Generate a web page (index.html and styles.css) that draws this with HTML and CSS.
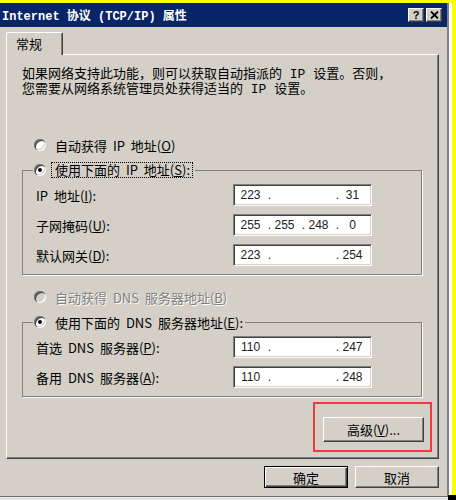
FILE: index.html
```html
<!DOCTYPE html>
<html lang="zh-CN">
<head>
  <meta charset="UTF-8" />
  <title>Internet 协议 (TCP/IP) 属性</title>
  <link rel="stylesheet" href="styles.css">
</head>
<body>
  <div class="screen">
    <div class="window">
      <div class="titlebar">
        <span class="title">Internet 协议 (TCP/IP) 属性</span>
        <div class="title-buttons">
          <span class="tbtn">?</span>
          <span class="tbtn">
            <svg width="9" height="8" viewBox="0 0 9 8"><path d="M1 0.5 L8 7.5 M8 0.5 L1 7.5" stroke="#000" stroke-width="1.8"/></svg>
          </span>
        </div>
      </div>
      <div class="content">
        <div class="tabs"><div class="tab">常规</div></div>
        <div class="panel">
          <p class="desc">如果网络支持此功能，则可以获取自动指派的 IP 设置。否则，<br>您需要从网络系统管理员处获得适当的 IP 设置。</p>

          <div class="option first"><span class="radio"></span><span>自动获得 IP 地址(<u>O</u>)</span></div>

          <fieldset class="group">
            <legend>
              <span class="option"><span class="radio checked"></span><span class="focus-box">使用下面的 IP 地址(<u>S</u>):</span></span>
            </legend>
            <div class="field-row">
              <span class="field-label">IP 地址(<u>I</u>):</span>
              <div class="ip-input">
                <span class="octet">223</span><span class="dot">.</span><span class="octet"></span><span class="dot"></span><span class="octet"></span><span class="dot">.</span><span class="octet">31</span>
              </div>
            </div>
            <div class="field-row">
              <span class="field-label">子网掩码(<u>U</u>):</span>
              <div class="ip-input">
                <span class="octet">255</span><span class="dot">.</span><span class="octet">255</span><span class="dot">.</span><span class="octet">248</span><span class="dot">.</span><span class="octet">0</span>
              </div>
            </div>
            <div class="field-row">
              <span class="field-label">默认网关(<u>D</u>):</span>
              <div class="ip-input">
                <span class="octet">223</span><span class="dot">.</span><span class="octet"></span><span class="dot"></span><span class="octet"></span><span class="dot">.</span><span class="octet">254</span>
              </div>
            </div>
          </fieldset>

          <div class="option disabled after-group"><span class="radio"></span><span>自动获得 DNS 服务器地址(<u>B</u>)</span></div>

          <fieldset class="group">
            <legend>
              <span class="option"><span class="radio checked"></span><span class="plain-box">使用下面的 DNS 服务器地址(<u>E</u>):</span></span>
            </legend>
            <div class="field-row">
              <span class="field-label">首选 DNS 服务器(<u>P</u>):</span>
              <div class="ip-input">
                <span class="octet">110</span><span class="dot">.</span><span class="octet"></span><span class="dot"></span><span class="octet"></span><span class="dot">.</span><span class="octet">247</span>
              </div>
            </div>
            <div class="field-row">
              <span class="field-label">备用 DNS 服务器(<u>A</u>):</span>
              <div class="ip-input">
                <span class="octet">110</span><span class="dot">.</span><span class="octet"></span><span class="dot"></span><span class="octet"></span><span class="dot">.</span><span class="octet">248</span>
              </div>
            </div>
          </fieldset>

          <div class="advanced">
            <div class="highlight">
              <button class="btn adv-btn">高级(<u>V</u>)...</button>
            </div>
          </div>
        </div>
        <div class="dialog-buttons">
          <button class="btn default">确定</button>
          <button class="btn">取消</button>
        </div>
      </div>
    </div>
  </div>
</body>
</html>
```

FILE: styles.css
```css
/* Reset */
* { margin: 0; padding: 0; box-sizing: border-box; }
body {
  background: #ffff00;
  font-family: "Noto Sans CJK SC", sans-serif;
  font-size: 13px;
  color: #000;
}
.screen {
  position: relative;
  width: 456px;
  height: 500px;
  padding-top: 3px;
  overflow: hidden;
}
/* stray corner from the screen capture */
.screen::after {
  content: "";
  position: absolute;
  right: 0;
  bottom: 0;
  width: 8px;
  height: 5px;
  background: #000;
}
/* Window frame */
.window {
  width: 449px;
  height: 494px;
  background: #d4d0c8;
  border-right: 2px solid #808080;
  border-bottom: 1px solid #707070;
  box-shadow: 3px 0 0 #fff, 0 3px 0 #e4e4e4;
}
.titlebar {
  height: 24px;
  background: #0a2468;
  display: flex;
  align-items: center;
  justify-content: space-between;
  padding: 0 5px 0 2px;
}
.title {
  color: #fff;
  font-family: "Liberation Mono", "Noto Sans CJK SC", monospace;
  font-weight: bold;
  font-size: 12px;
  white-space: nowrap;
}
.title-buttons { display: flex; gap: 2px; }
.tbtn {
  width: 16px;
  height: 14px;
  background: #d4d0c8;
  border: 1px solid;
  border-color: #fff #404040 #404040 #fff;
  box-shadow: inset -1px -1px #808080;
  display: flex;
  align-items: center;
  justify-content: center;
  font: bold 11px "Liberation Sans", sans-serif;
  line-height: 1;
}
/* Tab + panel */
.content { padding: 5px 0 0 6px; }
.tab {
  position: relative;
  z-index: 1;
  width: 57px;
  height: 23px;
  margin-bottom: -1px;
  background: #d4d0c8;
  border-top: 1px solid #fff;
  border-left: 1px solid #fff;
  border-right: 1px solid #404040;
  border-radius: 2px 2px 0 0;
  box-shadow: inset -1px 0 #808080;
  padding-left: 9px;
  line-height: 21px;
}
.panel {
  width: 433px;
  height: 405px;
  border: 1px solid;
  border-color: #fff #404040 #404040 #fff;
  box-shadow: inset -1px -1px #808080;
  padding: 12px 0 0 15px;
}
.desc {
  font-family: "Liberation Mono", "Noto Sans CJK SC", monospace;
  font-size: 13px;
  line-height: 15px;
  white-space: nowrap;
}
/* Radio options */
.option {
  display: flex;
  align-items: center;
  height: 16px;
  gap: 9px;
  padding-left: 12px;
  word-spacing: 3px;
  white-space: nowrap;
}
.option.first { margin-top: 40px; }
.option.after-group { margin-top: 14px; }
.option.disabled { color: #808080; text-shadow: 1px 1px 0 #fff; }
.radio {
  position: relative;
  flex: none;
  width: 12px;
  height: 12px;
  border-radius: 50%;
  background: #fff;
  box-shadow: inset 1px 1px 0 #808080, inset 2px 2px 0 #404040,
              inset -1px -1px 0 #fff, inset -2px -2px 0 #d4d0c8;
}
.option.disabled .radio { background: #d4d0c8; }
.radio.checked::after {
  content: "";
  position: absolute;
  left: 4px;
  top: 4px;
  width: 4px;
  height: 4px;
  border-radius: 50%;
  background: #000;
}
legend { padding: 0 2px 0 1px; }
legend .option { padding-left: 0; gap: 5px; }
.focus-box {
  border: 1px dotted #000;
  padding: 0 2px 0 3px;
  line-height: 14px;
}
.plain-box { padding-left: 4px; }
/* Group boxes */
.group {
  width: 400px;
  margin-top: 9px;
  border: 1px solid #808080;
  box-shadow: 1px 1px 0 #fff;
  padding: 6px 0 8px 10px;
}
.field-row {
  display: flex;
  align-items: center;
  height: 22px;
  padding-left: 3px;
  word-spacing: 3px;
  white-space: nowrap;
}
.field-row + .field-row { margin-top: 8px; }
.field-label { width: 197px; }
.ip-input {
  display: flex;
  align-items: center;
  width: 139px;
  height: 22px;
  background: #fff;
  border: 1px solid;
  border-color: #808080 #fff #fff #808080;
  box-shadow: inset 1px 1px #404040, inset -1px -1px #d4d0c8;
  padding-left: 3px;
  font-family: "Liberation Sans", sans-serif;
  font-size: 12px;
  color: #222;
  word-spacing: 0;
}
.octet { width: 27px; text-align: center; }
.dot { width: 7px; text-align: right; }
/* Buttons */
.btn {
  font-family: "Noto Sans CJK SC", sans-serif;
  font-size: 13px;
  color: #000;
  background: #d4d0c8;
  border: 1px solid;
  border-color: #fff #404040 #404040 #fff;
  box-shadow: inset -1px -1px #808080;
}
.btn.default {
  border-color: #000;
  box-shadow: inset 1px 1px #fff, inset -1px -1px #404040, inset -2px -2px #808080;
}
.advanced {
  display: flex;
  justify-content: flex-end;
  padding-right: 6px;
  margin-top: 5px;
}
.highlight {
  border: 2px solid #ee3b3b;
  padding: 13px 6px 8px 8px;
}
.adv-btn { width: 101px; height: 25px; }
.dialog-buttons {
  display: flex;
  justify-content: flex-end;
  gap: 7px;
  width: 433px;
  margin-top: 7px;
}
.dialog-buttons .btn { width: 84px; height: 22px; }
```
